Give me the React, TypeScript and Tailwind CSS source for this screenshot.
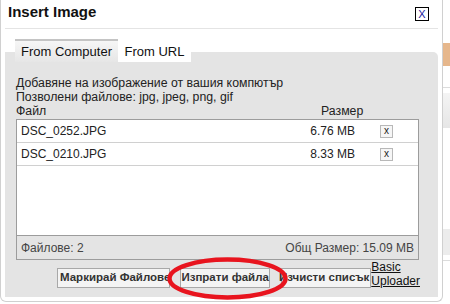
import React from 'react';

const files = [
    { name: 'DSC_0252.JPG', size: '6.76 MB' },
    { name: 'DSC_0210.JPG', size: '8.33 MB' },
];

const App = () => {
    return (
        <div className="flex w-[450px] h-[304px] bg-white overflow-hidden font-['Liberation_Sans',Arial,sans-serif] text-[#222]">
            {/* Dialog */}
            <div className="relative w-[443px] h-[302px] flex flex-col border border-t-0 border-[#d0d0d0] rounded-b-[6px] bg-white">
                {/* Header */}
                <div className="h-[29px] mx-[4px] flex items-start justify-between border-b border-[#e4e4e4] pl-[3px] pr-[9px]">
                    <h1 className="pt-[3px] text-[15px] leading-[17px] font-bold text-[#111]">Insert Image</h1>
                    <button className="mt-[7px] w-[14px] h-[14px] border border-black bg-white flex items-center justify-center text-[11px] leading-none text-[#1a1aa0]">
                        X
                    </button>
                </div>

                {/* Tabs + panel */}
                <div className="mt-[11px] px-[4px] flex flex-col">
                    <div className="relative z-10 flex h-[22px] pl-[10px]">
                        <div className="w-[103px] h-[23px] -mt-[1px] border-t-2 border-[#c4c4c4] bg-gradient-to-b from-[#f6f6f6] to-[#e6e6e6] flex items-center justify-center text-[13px] text-[#111]">
                            From Computer
                        </div>
                        <div className="w-[73px] h-[21px] mt-[1px] bg-white flex items-center justify-center text-[13px] text-[#111]">
                            From URL
                        </div>
                    </div>

                    <div className="-mt-[10px] h-[245px] bg-[#e4e4e4] rounded-tr-[5px] pt-[24px] pl-[11px] pr-[18px] pb-[10px] flex flex-col text-[12px]">
                        <p className="leading-[14px] text-[12.3px]">Добавяне на изображение от вашия компютър</p>
                        <p className="leading-[14px] text-[12.3px]">Позволени файлове: jpg, jpeg, png, gif</p>
                        <div className="flex leading-[14px] text-[12.3px]">
                            <span className="w-[305px]">Файл</span>
                            <span>Размер</span>
                        </div>

                        {/* File list */}
                        <div className="mt-[1px] w-[403px] border border-[#9c9c9c] bg-white flex flex-col">
                            {files.map((file, index) => (
                                <div key={index} className="h-[23px] flex items-center border-b border-[#d0d0d0]">
                                    <span className="w-[263px] pl-[4px]">{file.name}</span>
                                    <span className="w-[75px] text-right">{file.size}</span>
                                    <span className="ml-[25px] w-[13px] h-[13px] border border-[#b8b8b8] bg-[#f6f6f6] flex items-center justify-center text-[10px] leading-none">
                                        x
                                    </span>
                                </div>
                            ))}
                            <div className="h-[69px]" />
                            <div className="h-[24px] border-t border-[#9c9c9c] bg-[#e4e4e4] px-[4px] flex items-center justify-between text-[#444]">
                                <span>Файлове: 2</span>
                                <span>Общ Размер: 15.09 MB</span>
                            </div>
                        </div>

                        {/* Buttons */}
                        <div className="flex items-end pl-[41px] text-[11.5px]">
                            <button className="w-[113px] h-[20px] border border-[#a8a8a8] bg-[#f4f4f4] px-[2px] text-left font-bold text-[#333] whitespace-nowrap">
                                Маркирай Файлове
                            </button>
                            <button className="ml-[10px] w-[92px] h-[20px] border border-[#a8a8a8] bg-[#f4f4f4] font-bold text-[#333] whitespace-nowrap">
                                Изпрати файла
                            </button>
                            <button className="ml-[11px] w-[90px] h-[20px] border border-[#a8a8a8] bg-[#f4f4f4] font-bold text-[#333] whitespace-nowrap flex items-center justify-end pr-[1px]">
                                Изчисти списък
                            </button>
                            <a href="#" className="leading-[14px] text-[12px] underline text-[#111]">
                                Basic
                                <br />
                                Uploader
                            </a>
                        </div>
                    </div>
                </div>

                {/* Red annotation ellipse */}
                <svg className="absolute left-[166px] top-[257px]" width="121" height="43" viewBox="0 0 121 43">
                    <ellipse cx="60.5" cy="21.5" rx="58" ry="19" fill="none" stroke="#e8141e" strokeWidth="4.5" />
                </svg>
            </div>

            {/* Page behind the dialog */}
            <div className="w-[7px] flex flex-col">
                <div className="h-[43px]" />
                <div className="h-[23px] bg-[#e6b78c]" />
                <div className="h-[21px]" />
                <div className="h-[1px] bg-[#dcdcdc]" />
                <div className="h-[5px]" />
                <div className="h-[35px] bg-gradient-to-b from-[#f4f4f4] to-[#e6e6e6]" />
                <div className="h-[101px]" />
                <div className="h-[26px] bg-[#ececec]" />
                <div className="h-[5px]" />
                <div className="h-[1px] bg-[#dcdcdc]" />
            </div>
        </div>
    );
};

export default App;
